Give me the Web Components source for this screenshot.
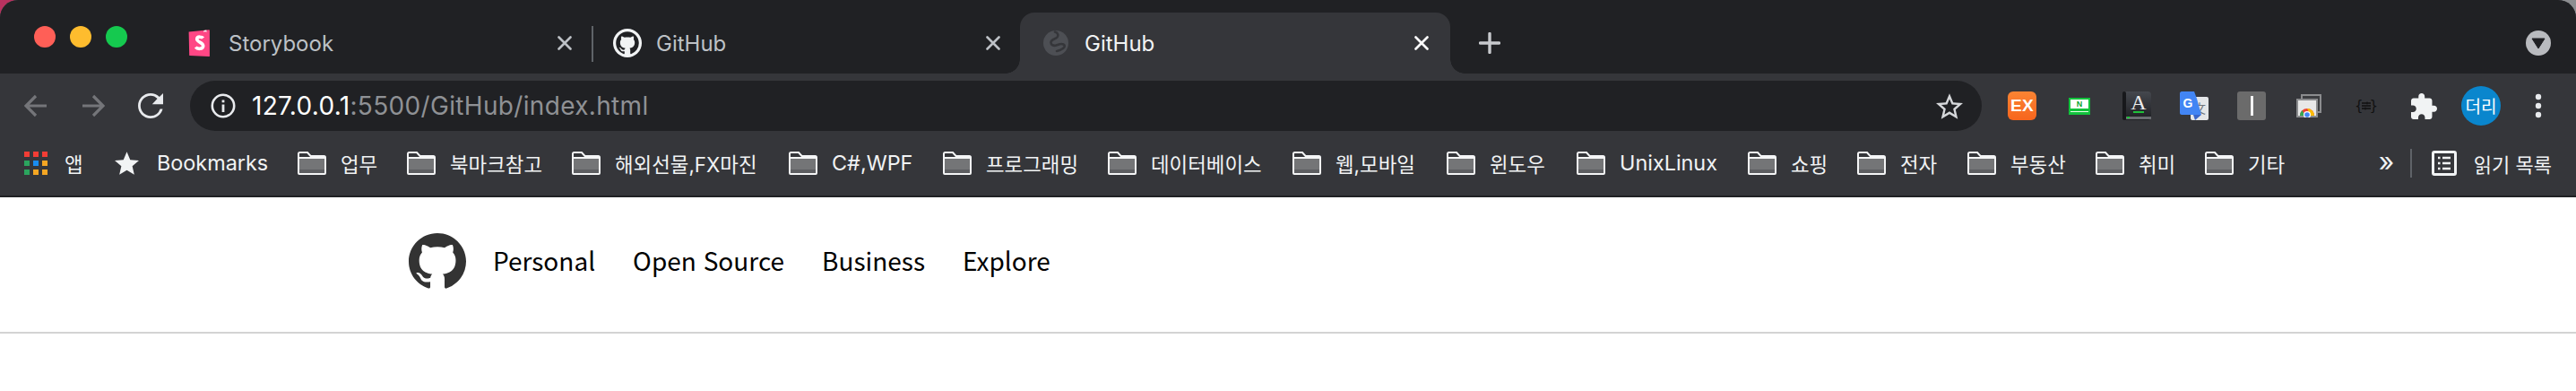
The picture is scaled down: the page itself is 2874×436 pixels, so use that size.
<!doctype html>
<html lang="ko"><head><meta charset="utf-8"><title>GitHub</title>
<style>
html,body{margin:0;padding:0;height:100%}
body{background:#fff;font-family:Inter,"Noto Sans CJK KR",sans-serif}
</style></head><body>
<browser-frame>
  <tab-strip>
    <browser-tab style="--w:476px;--pl:26px;--tg:21px;--pr:22px;" label="Storybook" icon="storybook"></browser-tab>
    <tab-divider></tab-divider>
    <browser-tab style="--w:476px;--pl:22px;--tg:16px;--pr:22px;" label="GitHub" icon="octo"></browser-tab>
    <browser-tab active style="--w:480px;--pl:26px;--tg:18px;--pr:24px;" label="GitHub" icon="globe"></browser-tab>
  </tab-strip>
  <nav-toolbar url-host="127.0.0.1" url-rest=":5500/GitHub/index.html"></nav-toolbar>
  <bookmark-bar>
    <bookmark-item icon="apps" w="101" gap="19">앱</bookmark-item>
    <bookmark-item icon="star" w="204" gap="20">Bookmarks</bookmark-item>
    <bookmark-item icon="folder" w="122">업무</bookmark-item>
    <bookmark-item icon="folder" w="184">북마크참고</bookmark-item>
    <bookmark-item icon="folder" w="242">해외선물,FX마진</bookmark-item>
    <bookmark-item icon="folder" w="172">C#,WPF</bookmark-item>
    <bookmark-item icon="folder" w="184">프로그래밍</bookmark-item>
    <bookmark-item icon="folder" w="206">데이터베이스</bookmark-item>
    <bookmark-item icon="folder" w="172">웹,모바일</bookmark-item>
    <bookmark-item icon="folder" w="145">윈도우</bookmark-item>
    <bookmark-item icon="folder" w="191">UnixLinux</bookmark-item>
    <bookmark-item icon="folder" w="122">쇼핑</bookmark-item>
    <bookmark-item icon="folder" w="123">전자</bookmark-item>
    <bookmark-item icon="folder" w="143">부동산</bookmark-item>
    <bookmark-item icon="folder" w="122">취미</bookmark-item>
    <bookmark-item icon="folder" w="122">기타</bookmark-item>
  </bookmark-bar>
</browser-frame>
<site-header>
  <nav-link>Personal</nav-link>
  <nav-link>Open Source</nav-link>
  <nav-link>Business</nav-link>
  <nav-link>Explore</nav-link>
</site-header>
<script>
const OCTO="M8 0C3.58 0 0 3.58 0 8c0 3.54 2.29 6.53 5.47 7.59.4.07.55-.17.55-.38 0-.19-.01-.82-.01-1.49-2.01.37-2.53-.49-2.69-.94-.09-.23-.48-.94-.82-1.13-.28-.15-.68-.52-.01-.53.63-.01 1.08.58 1.23.82.72 1.21 1.87.87 2.33.66.07-.52.28-.87.51-1.07-1.78-.2-3.64-.89-3.64-3.95 0-.87.31-1.59.82-2.15-.08-.2-.36-1.02.08-2.12 0 0 .67-.21 2.2.82.64-.18 1.32-.27 2-.27.68 0 1.36.09 2 .27 1.53-1.04 2.2-.82 2.2-.82.44 1.1.16 1.92.08 2.12.51.56.82 1.27.82 2.15 0 3.07-1.87 3.75-3.65 3.95.29.25.54.73.54 1.48 0 1.07-.01 1.93-.01 2.2 0 .21.15.46.55.38A8.013 8.013 0 0016 8c0-4.42-3.58-8-8-8z";
const ICONS={
 storybook:`<svg width="24" height="30" viewBox="0 0 24 30"><path d="M.6 2.6 23.2.3c.4 0 .7.2.7.6V29.4c0 .4-.3.6-.7.6L1.8 29c-.4 0-.6-.3-.6-.6z" fill="#ff4785"/><path d="M17.4.9l3-.3V3l-1.5-1-1.5 1z" fill="#fff"/><path d="M16.6 9.6c-1-1.5-6.6-2.6-6.9.9-.3 3.6 7.3 3.6 7 7.9-.3 3.7-6.500 3.700-8.400 1.100" fill="none" stroke="#fff" stroke-width="3.600"/></svg>`,
 octo:`<svg width="32" height="32" viewBox="-2 -2 20 20"><circle cx="8" cy="8" r="10" fill="#f1f3f4"/><path d="${OCTO}" fill="#202124"/></svg>`,
 globe:`<svg width="28" height="28" viewBox="0 0 28 28"><circle cx="14" cy="14" r="14" fill="#4d4f54"/><path d="M13 1.500c3.500 1 4 4 2.500 6-2 2.500-6.500 2-7 5.500-.4 3 3 4.500 6 3.500 2.500-.8 5-2.500 8-1 2 1 1.500 3-.5 4.500-2 1.500-4 2.500-7 3" fill="none" stroke="#35363a" stroke-width="2.600" stroke-linecap="round"/></svg>`,
 close:`<svg width="16" height="16" viewBox="0 0 16 16"><path d="M1.500 1.500l13 13M14.500 1.500l-13 13" stroke="currentColor" stroke-width="2.600" fill="none" stroke-linecap="round"/></svg>`,
 plus:`<svg width="24" height="24" viewBox="0 0 24 24"><path d="M12 1.500v21M1.500 12h21" stroke="#c7c9cd" stroke-width="3.400" fill="none" stroke-linecap="round"/></svg>`,
 back:`<svg width="26" height="26" viewBox="0 0 26 26"><path d="M25 13H2M13 2 2 13l11 11" stroke="#747579" stroke-width="3.200" fill="none"/></svg>`,
 forward:`<svg width="26" height="26" viewBox="0 0 26 26"><path d="M1 13h23M13 2l11 11-11 11" stroke="#747579" stroke-width="3.200" fill="none"/></svg>`,
 reload:`<svg width="28" height="28" viewBox="4 4 16 16"><path d="M17.650 6.350A7.958 7.958 0 0012 4c-4.420 0-7.990 3.580-7.990 8s3.570 8 7.990 8c3.730 0 6.840-2.550 7.730-6h-1.700A6.400 6.400 0 0112 18.400c-3.500 0-6.400-2.900-6.400-6.400s2.900-6.400 6.400-6.400c1.660 0 3.240.690 4.320 1.880L13 11h7V4l-2.350 2.350z" fill="#e8eaed"/></svg>`,
 info:`<svg width="28" height="28" viewBox="0 0 28 28"><circle cx="14" cy="14" r="12.200" fill="none" stroke="#e8eaed" stroke-width="2.600"/><rect x="12.600" y="7.500" width="2.800" height="2.800" fill="#e8eaed"/><rect x="12.600" y="12.500" width="2.800" height="8.500" fill="#e8eaed"/></svg>`,
 starO:`<svg width="30" height="29" viewBox="2 2 20 19"><path d="M22 9.240l-7.190-.62L12 2 9.190 8.630 2 9.240l5.460 4.730L5.820 21 12 17.270 18.180 21l-1.630-7.030L22 9.240zM12 15.400l-3.760 2.270 1-4.280-3.320-2.880 4.380-.38L12 6.100l1.710 4.040 4.380.38-3.320 2.880 1 4.280L12 15.400z" fill="#d6d8db"/></svg>`,
 star:`<svg width="27" height="26" viewBox="2 2 20 19"><path d="M12 17.270L18.180 21l-1.640-7.030L22 9.240l-7.190-.61L12 2 9.190 8.630 2 9.240l5.460 4.730L5.820 21z" fill="#f1f3f4"/></svg>`,
 folder:`<svg width="32" height="26" viewBox="0 0 32 26"><path d="M2 7h28v17H2z" fill="#747577"/><path d="M2 20h28v4H2z" fill="#5d5e61"/><path d="M1 24V2.500C1 1.700 1.700 1 2.500 1h8.500l3.500 4h15c.8 0 1.500.7 1.500 1.500v17.500c0 .600-.500 1-1 1H2c-.500 0-1-.400-1-1zM1 7h30" fill="none" stroke="#f4f5f6" stroke-width="2"/></svg>`,
 apps:`<span style="display:grid;grid-template-columns:repeat(3,6px);grid-auto-rows:6px;gap:4px">${['#f23d35','#f23d35','#f23d35','#2ba55e','#1a8cf0','#f5a623','#2ba55e','#f5a623','#f5a623'].map(c=>`<i style="background:${c};display:block"></i>`).join('')}</span>`,
 ex:`<span style="width:32px;height:32px;border-radius:6px;background:linear-gradient(#fa8433,#f7651d);color:#fff;font:700 19px/32px 'Liberation Sans',sans-serif;text-align:center;letter-spacing:.3px;display:block">EX</span>`,
 naver:`<span style="width:24px;height:19px;display:block;position:relative;background:#12c23c"><b style="position:absolute;left:2px;top:2px;right:2px;height:10px;background:#fff;color:#0aa52f;font:700 9px/10px 'Liberation Sans',sans-serif;text-align:center">N</b><i style="position:absolute;left:2px;right:2px;top:15px;height:1px;background:#e8ffe8"></i></span>`,
 abook:`<svg width="32" height="32" viewBox="0 0 32 32"><defs><linearGradient id="bk" x1="0" x2="0" y1="0" y2="1"><stop offset="0" stop-color="#45484e"/><stop offset="1" stop-color="#1d1e22"/></linearGradient></defs><rect width="32" height="32" rx="4" fill="url(#bk)"/><rect x="0" y="0" width="4" height="32" rx="2" fill="#17181b"/><rect x="4" y="28" width="28" height="3" fill="#6a6d72"/><text x="18" y="20" font-family="'Liberation Serif',serif" font-size="24" text-anchor="middle" fill="#ececec">A</text><rect x="12" y="22" width="12" height="2" fill="#1fc13a"/><rect x="5" y="28" width="3" height="2" fill="#1fc13a"/></svg>`,
 gtrans:`<svg width="32" height="32" viewBox="0 0 32 32"><rect x="12" y="6" width="20" height="26" rx="2" fill="#e4e6e8"/><text x="22" y="24" font-family="'Noto Sans CJK SC',sans-serif" font-size="14" text-anchor="middle" fill="#70757a">文</text><path d="M2 0h14l3 8 5 18H2c-1 0-2-1-2-2V2C0 1 1 0 2 0z" fill="#4285f4"/><path d="M15 26h9l-7 6z" fill="#3a66c8"/><text x="9" y="18" font-family="'Liberation Sans',sans-serif" font-weight="700" font-size="14" text-anchor="middle" fill="#fff">G</text></svg>`,
 ibar:`<span style="width:32px;height:32px;border-radius:3px;background:#6b6b6b;display:flex;justify-content:center;align-items:center"><i style="display:block;width:3px;height:22px;background:#f4f4f4"></i></span>`,
 webstore:`<svg width="28" height="26" viewBox="0 0 28 26"><rect x="6" y="1" width="21" height="19" fill="#3c3d40" stroke="#8b8c8e" stroke-width="2"/><rect x="1" y="6" width="22" height="19" fill="#e8e8e8" stroke="#8b8c8e" stroke-width="2"/><path d="M4 24a8 8 0 0 1 16 0z" fill="#ea4335"/><path d="M4 24a8 8 0 0 1 2.500-6l3 6z" fill="#34a853"/><path d="M12 16a8 8 0 0 1 8 8h-4z" fill="#fbbc05"/><circle cx="12" cy="23" r="4" fill="#fff"/><circle cx="12" cy="23" r="2.800" fill="#4285f4"/></svg>`,
 json:`<svg width="26" height="16" viewBox="0 0 26 16"><text x="0" y="13" font-family="'DejaVu Sans',sans-serif" font-size="15" fill="#111">{</text><text x="26" y="13" text-anchor="end" font-family="'DejaVu Sans',sans-serif" font-size="15" fill="#111">}</text><path d="M8 5h10M8 8h10M8 11h10" stroke="#111" stroke-width="1.300"/><path d="M14 3.500v3M12 9.500v3" stroke="#111" stroke-width="1"/></svg>`,
 puzzle:`<svg width="29" height="29" viewBox="2 1 21 21"><path d="M20.500 11H19V7c0-1.100-.9-2-2-2h-4V3.500C13 2.120 11.880 1 10.500 1S8 2.120 8 3.500V5H4c-1.100 0-1.990.9-1.990 2v3.800H3.500c1.490 0 2.700 1.210 2.700 2.700s-1.210 2.700-2.700 2.700H2V20c0 1.100.9 2 2 2h3.800v-1.500c0-1.490 1.210-2.700 2.700-2.700 1.490 0 2.700 1.210 2.700 2.700V22H17c1.100 0 2-.9 2-2v-4h1.500c1.380 0 2.500-1.120 2.500-2.500S21.880 11 20.500 11z" fill="#f1f3f4"/></svg>`,
 dots:`<svg width="8" height="28" viewBox="0 0 8 28"><circle cx="4" cy="4" r="3.200" fill="#e8eaed"/><circle cx="4" cy="14" r="3.200" fill="#e8eaed"/><circle cx="4" cy="24" r="3.200" fill="#e8eaed"/></svg>`,
 list:`<svg width="28" height="28" viewBox="0 0 28 28"><rect x="1.500" y="1.500" width="25" height="25" rx="1.500" fill="none" stroke="#f1f3f4" stroke-width="3"/><path d="M7 8h2.500M7 14h2.500M7 20h2.500M12 8h9M12 14h9M12 20h9" stroke="#f1f3f4" stroke-width="2.400" fill="none"/></svg>`,
 tri:`<svg width="28" height="28" viewBox="0 0 28 28"><circle cx="14" cy="14" r="14" fill="#b9bbbf"/><path d="M7 9h14l-7 11z" fill="#202124" stroke="#202124" stroke-linejoin="round"/></svg>`,
 octoLarge:`<svg width="64" height="62" viewBox="0 0 16 15.700" preserveAspectRatio="none"><path d="${OCTO}" fill="#333"/></svg>`
};
const define=(name,html,init)=>customElements.define(name,class extends HTMLElement{
  constructor(){super();this.attachShadow({mode:'open'}).innerHTML=html;}
  connectedCallback(){init&&init.call(this,this.shadowRoot);}
});
define('x-icon',`<style>:host{display:inline-flex;align-items:center;justify-content:center;flex:none;line-height:0}</style><span id="i" style="display:contents"></span>`,
 function(r){r.getElementById('i').innerHTML=ICONS[this.getAttribute('name')]||'';});
define('browser-frame',`<style>:host{display:block;background:linear-gradient(90deg,#b7325f 0,#b7325f 24px,#8d8e91 2840px)}
 .w{display:block;background:#35363a;border-radius:20px 20px 0 0;box-shadow:inset 0 1px 0 #5a5b5f;overflow:hidden;height:218px;border-bottom:2px solid #202124}</style><div class="w"><slot></slot></div>`);
define('tab-strip',`<style>:host{display:flex;height:82px;background:#202124}
 .lights{display:flex;gap:16px;margin:29px 0 0 38px;height:24px;width:146px;flex:none}
 .lights i{display:block;width:24px;height:24px;border-radius:50%}
 .tabs{display:flex;align-items:stretch}
 x-icon.plus{margin:36px 0 0 32px;height:24px}
 x-icon.drop{margin:34px 28px 0 auto;height:28px}</style>
 <div class="lights"><i style="background:#ff5f57"></i><i style="background:#febc2e"></i><i style="background:#15c94f"></i></div>
 <div class="tabs"><slot></slot></div>
 <x-icon class="plus" name="plus"></x-icon><x-icon class="drop" name="tri"></x-icon>`);
define('tab-divider',`<style>:host{display:block;width:2px;height:40px;margin-top:29px;background:#5f6368;flex:none}</style>`);
define('browser-tab',`<style>:host{display:flex;align-items:center;box-sizing:border-box;width:var(--w);height:82px;padding:14px var(--pr) 0 var(--pl);color:#bdc1c6;font:400 24px Inter,"Noto Sans CJK KR",sans-serif;flex:none;position:relative}
 :host([active]){background:#35363a;color:#f1f3f4;margin-top:14px;height:68px;border-radius:16px 16px 0 0;padding-top:0;z-index:1}
 :host([active])::before,:host([active])::after{content:"";position:absolute;bottom:0;width:16px;height:16px}
 :host([active])::before{left:-16px;background:radial-gradient(circle at 0 0,transparent 15.500px,#35363a 16px)}
 :host([active])::after{right:-16px;background:radial-gradient(circle at 100% 0,transparent 15.500px,#35363a 16px)}
 :host([active]) #c{color:#fff}
 .ico{display:flex;flex:none}
 .t{margin-left:var(--tg);flex:1;white-space:nowrap}
 #c{color:#bdc1c6;height:16px}</style>
 <span class="ico"><x-icon id="ic"></x-icon></span><span class="t" id="t"></span><x-icon id="c" name="close"></x-icon>`,
 function(r){r.getElementById('ic').shadowRoot.getElementById('i').innerHTML=ICONS[this.getAttribute('icon')];r.getElementById('t').textContent=this.getAttribute('label');});
define('nav-toolbar',`<style>:host{display:flex;align-items:center;height:64px;padding:8px 10px 0 8px;box-sizing:border-box;background:#35363a}
 .cell{width:64px;height:56px;display:flex;align-items:center;justify-content:center;flex:none}
 .bar{flex:1;height:56px;border-radius:28px;background:#202124;margin:0 13px 0 12px;display:flex;align-items:center;padding:0 21px 0 23px;box-sizing:border-box}
 .url{margin-left:18px;flex:1;font:400 28px Inter,sans-serif;letter-spacing:.33px;color:#8f9195;white-space:nowrap}
 .url b{font-weight:400;color:#fff}
 .av{width:44px;height:44px;border-radius:50%;background:#0a86cd;color:#fff;font:400 19px/44px "Noto Sans CJK KR",sans-serif;text-align:center;display:block}</style>
 <span class="cell"><x-icon name="back"></x-icon></span><span class="cell"><x-icon name="forward"></x-icon></span><span class="cell"><x-icon name="reload"></x-icon></span>
 <div class="bar"><x-icon name="info"></x-icon><span class="url"><b id="h"></b><span id="u"></span></span><x-icon name="starO"></x-icon></div>
 <span class="cell"><x-icon name="ex"></x-icon></span><span class="cell"><x-icon name="naver"></x-icon></span><span class="cell"><x-icon name="abook"></x-icon></span><span class="cell"><x-icon name="gtrans"></x-icon></span><span class="cell"><x-icon name="ibar"></x-icon></span><span class="cell"><x-icon name="webstore"></x-icon></span><span class="cell"><x-icon name="json"></x-icon></span><span class="cell"><x-icon name="puzzle"></x-icon></span><span class="cell"><span class="av">더리</span></span><span class="cell"><x-icon name="dots"></x-icon></span>`,
 function(r){r.getElementById('h').textContent=this.getAttribute('url-host');r.getElementById('u').textContent=this.getAttribute('url-rest');});
define('bookmark-bar',`<style>:host{display:flex;align-items:center;height:72px;padding:0 27px 1px 27px;box-sizing:border-box;background:#35363a;color:#f1f3f4;font:400 24px Inter,"Noto Sans CJK KR",sans-serif}
 .end{margin-left:auto;display:flex;align-items:center}
 .more{width:12px;font-size:30px;line-height:30px;margin-top:-4px}
 .sep{width:2px;height:32px;background:#5f6368;margin:0 22px 0 23px}
 .read{margin-left:19px;font-size:22px;white-space:nowrap}</style>
 <slot></slot><div class="end"><span class="more">»</span><span class="sep"></span><x-icon name="list"></x-icon><span class="read">읽기 목록</span></div>`);
define('bookmark-item',`<style>:host{display:flex;align-items:center;flex:none;white-space:nowrap}
 .t{margin-left:var(--g,16px);font-size:23.400px}
 .t.k{font-size:22.400px}</style><x-icon id="ic"></x-icon><span class="t" id="t"><slot></slot></span>`,
 function(r){this.style.width=this.getAttribute('w')+'px';const n=this.getAttribute('icon');r.getElementById('ic').shadowRoot.getElementById('i').innerHTML=ICONS[n];
  if(this.hasAttribute('gap'))this.style.setProperty('--g',this.getAttribute('gap')+'px');
  if(/[가-힣]/.test(this.textContent))r.getElementById('t').classList.add('k');});
define('site-header',`<style>:host{display:flex;align-items:center;box-sizing:border-box;height:152px;padding:0 0 0 456px;background:#fff;border-bottom:2px solid #d3d3d3;color:#000}
 .logo{margin:-8px 30px 0 0}
 nav{display:flex;gap:42px;margin-top:-11px}</style>
 <x-icon class="logo" name="octoLarge"></x-icon><nav><slot></slot></nav>`);
define('nav-link',`<style>:host{display:block;font:400 28px "Noto Sans CJK KR",sans-serif;color:#000;white-space:nowrap}</style><slot></slot>`);
</script>
</body></html>
